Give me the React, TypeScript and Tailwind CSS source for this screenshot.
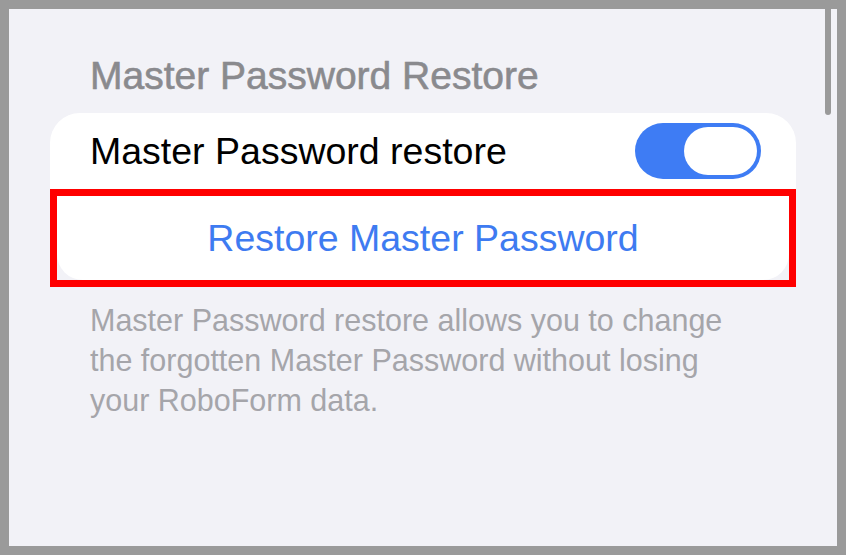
import React from 'react';

const FONT = "font-['Liberation_Sans','Helvetica_Neue',Arial,sans-serif]";

function Toggle({ on }: { on: boolean }) {
  return (
    <div className={'flex h-[56px] w-[126px] items-center rounded-full p-[4px] ' + (on ? 'justify-end bg-[#3e7cf4]' : 'justify-start bg-[#e5e5ea]')}>
      <div className="h-[48px] w-[73px] rounded-full bg-white" />
    </div>
  );
}

export default function App() {
  return (
    <div className={FONT + ' h-[555px] w-[846px] bg-[#9a9a9a] p-[9px]'}>
      <div className="relative h-full overflow-hidden bg-[#f2f2f7] pt-[44px]">
        {/* scroll indicator */}
        <div className="absolute right-[6px] top-0 h-[106px] w-[6px] rounded-b-full bg-[#9a9a9a]" />

        {/* section header */}
        <h2 className="pl-[81px] text-[39px] leading-[46px] text-[#8a8a8e] [-webkit-text-stroke:0.6px_#8a8a8e]">Master Password Restore</h2>

        {/* grouped card */}
        <div className="mx-[41px] mt-[14px]">
          <div className="flex h-[76px] items-center justify-between rounded-t-[30px] bg-white pl-[40px] pr-[35px]">
            <span className="text-[37.5px] leading-[44px] text-black">Master Password restore</span>
            <Toggle on />
          </div>
          <div className="border-[7px] border-[#ff0000] bg-[#f2f2f7]">
            <button className="flex h-[84px] w-full items-center justify-center rounded-b-[26px] bg-white text-[37.5px] leading-[44px] text-[#3e7bf1]">
              Restore Master Password
            </button>
          </div>
        </div>

        {/* footer note */}
        <p className="mt-[13px] max-w-[745px] pl-[81px] text-[30.5px] leading-[40px] text-[#a5a5aa]">
          Master Password restore allows you to change the forgotten Master Password without losing your RoboForm data.
        </p>
      </div>
    </div>
  );
}
